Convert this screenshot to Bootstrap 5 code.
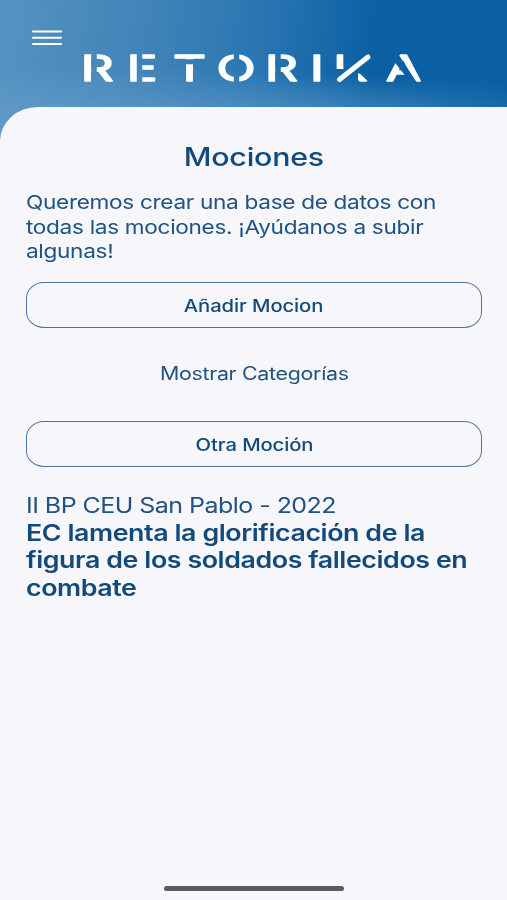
<!DOCTYPE html>
<html lang="es">
<head>
<meta charset="utf-8">
<meta name="viewport" content="width=device-width, initial-scale=1">
<title>Retorika</title>
<link href="https://cdn.jsdelivr.net/npm/bootstrap@5.3.0/dist/css/bootstrap.min.css" rel="stylesheet">
<style>
html,body{height:100%}
body{background:#f6f6fb;color:#1f5285;font-family:Inter,"Liberation Sans",sans-serif;overflow:hidden}
.screen{height:900px;background:
 radial-gradient(ellipse 360px 60px at 130px 125px,rgba(120,170,212,.5),transparent),
 radial-gradient(ellipse 240px 40px at 360px 115px,rgba(90,150,198,.45),transparent),
 linear-gradient(97deg,#5593c1 0,#4486b9 130px,#2a76b2 260px,#0a60a3 380px,#0a60a3 100%)}
.topbar{height:107px;padding:29px 32px 0}
.menu-btn{width:30px;height:17px}
.wordmark{width:344px;height:34px;margin:6px 0 0 50px;overflow:visible}
.sheet{background:#f6f6fb;border-top-left-radius:38px 34px;padding:0 25px 0 26px}
.ln{display:block;width:max-content;white-space:nowrap;transform:scaleX(1.19);transform-origin:0 50%}
.ln.mid{margin:0 auto;transform-origin:50% 50%}
.title{font-size:25.5px;line-height:32px;font-weight:500;letter-spacing:-.2px;margin:34px 0 18px;color:#124a7c}
.intro{font-size:19px;line-height:24.5px;letter-spacing:-.27px;margin:0 0 17px}
.btn-pill{height:46px;border:1.4px solid #4a74a4;border-radius:18px / 16px;color:#124a7c;font-size:17px;font-weight:500;letter-spacing:-.08px;padding:4px 0 0}
.toggle{font-size:18px;line-height:24px;letter-spacing:-.27px;margin:34px 0 35px}
.motion{margin-top:25px;line-height:27.5px}
.source{font-size:21px;letter-spacing:-.45px}
.topic{font-size:22.5px;font-weight:600;letter-spacing:-.35px;color:#124a7c;margin:-.5px 0 0;line-height:27.7px}
.home-bar{width:180px;height:5px;background:#5b5b5e;margin-bottom:9px}
</style>
<script src="https://cdn.jsdelivr.net/npm/bootstrap@5.3.0/dist/js/bootstrap.bundle.min.js"></script>
</head>
<body>
<div class="screen d-flex flex-column">
<header class="topbar">
<svg class="menu-btn d-block" viewBox="0 0 30 17" stroke="#fff" stroke-width="2" stroke-linecap="round"><path d="M1 2.500h28M1 8.700h28M1 14.900h28"/></svg>
<svg class="wordmark d-block" viewBox="82 52 344 34">
<!-- stencil cuts through the wordmark -->
<mask id="cuts" maskUnits="userSpaceOnUse" x="80" y="50" width="350" height="38">
<rect x="80" y="50" width="350" height="38" fill="#fff"/>
<path d="M94 50v38M139.500 50v38M236.500 50v38M278 50v38" stroke="#000" stroke-width="5.500"/>
<path d="M170 61.800h42" stroke="#000" stroke-width="5"/>
<path d="M334 69h9.500V50H376v23.500H358v15H334zM385 50h10.500l23 35h-6z"/>
</mask>
<g mask="url(#cuts)"><text transform="scale(1.42 1)" y="81" x="56.900 89.300 121.900 152.400 186.700 218.300 234.700 271.900" font-size="36" font-weight="400" fill="#fff" stroke="#fff" stroke-width="1.500" stroke-linejoin="round">RETORIKA</text></g>
<path d="M339.500 79.500L368 57" stroke="#fff" stroke-width="5" stroke-linecap="round"/>
</svg>
</header>
<main class="sheet flex-grow-1 d-flex flex-column">
<h1 class="title"><span class="ln mid">Mociones</span></h1>
<p class="intro"><span class="ln">Queremos crear una base de datos con</span><span class="ln">todas las mociones. ¡Ayúdanos a subir</span><span class="ln">algunas!</span></p>
<button class="btn btn-pill w-100"><span class="ln mid">Añadir Mocion</span></button>
<div class="toggle"><span class="ln mid">Mostrar Categorías</span></div>
<button class="btn btn-pill w-100"><span class="ln mid">Otra Moción</span></button>
<section class="motion"><span class="ln source">II BP CEU San Pablo - 2022</span><h2 class="topic"><span class="ln">EC lamenta la glorificación de la</span><span class="ln">figura de los soldados fallecidos en</span><span class="ln">combate</span></h2></section>
<div class="home-bar rounded-pill mt-auto mx-auto"></div>
</main>
</div>
</body>
</html>
